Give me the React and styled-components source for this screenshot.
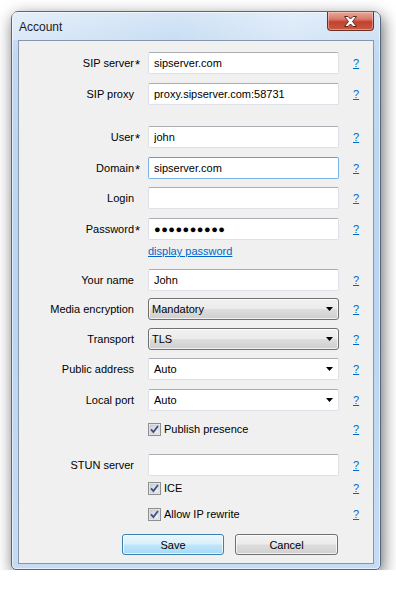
import React from "react";
import styled, { createGlobalStyle } from "styled-components";

const GlobalStyle = createGlobalStyle`
  body {
    margin: 0;
    background: #ffffff;
    font-family: "Liberation Sans", Arial, sans-serif;
    font-size: 11px;
    color: #000;
  }
`;

const Window = styled.div`
  box-sizing: border-box;
  margin: 11px 0 0 11px;
  width: 370px;
  height: 559px;
  padding: 0 6px 5px 6px;
  display: flex;
  flex-direction: column;
  border: 1px solid #55687d;
  border-radius: 7px 7px 5px 5px;
  background: linear-gradient(
    to bottom,
    #d6e6f7 0%,
    #c1d9f2 8%,
    #bad5f1 50%,
    #c6dcf4 100%
  );
  box-shadow: 2px 5px 16px rgba(0, 0, 0, 0.6), inset 0 0 0 1px rgba(255, 255, 255, 0.55);
`;

const TitleBar = styled.div`
  height: 28px;
  display: flex;
  justify-content: space-between;
  align-items: flex-start;
  background: linear-gradient(
    100deg,
    rgba(255, 255, 255, 0.35) 0%,
    rgba(255, 255, 255, 0) 45%,
    rgba(255, 255, 255, 0.3) 75%,
    rgba(255, 255, 255, 0.1) 100%
  );
  margin: 0 -6px;
  padding: 0 6px;
`;

const Title = styled.span`
  padding: 8px 0 0 1px;
  font-size: 12px;
  color: #1a1a2a;
`;

const CloseButton = styled.div`
  box-sizing: border-box;
  width: 47px;
  height: 19px;
  display: flex;
  align-items: center;
  justify-content: center;
  border: 1px solid #6b2f27;
  border-top: none;
  border-radius: 0 0 4px 4px;
  background: linear-gradient(
    to bottom,
    #e9a99b 0%,
    #d9796a 40%,
    #c2412e 55%,
    #c85a3f 100%
  );
  box-shadow: inset 0 0 0 1px rgba(255, 220, 210, 0.45);
`;

const Panel = styled.div`
  flex: 1;
  display: flex;
  flex-direction: column;
  padding-top: 11px;
  border: 1px solid #8797aa;
  background: #f0f0f0;
`;

const Row = styled.div`
  display: grid;
  grid-template-columns: 123px 191px 1fr;
  column-gap: 6px;
  align-items: center;
  height: ${(p) => p.$h || 22}px;
  margin-top: ${(p) => p.$mt || 0}px;
`;

const Label = styled.span`
  display: flex;
  justify-content: flex-end;
  align-items: center;
  white-space: nowrap;
`;

const Star = styled.span`
  display: inline-block;
  width: 8px;
  padding-left: 1px;
  box-sizing: border-box;
  font-size: 13px;
  line-height: 11px;
  margin-top: 2px;
`;

const TextField = styled.input`
  box-sizing: border-box;
  width: 191px;
  height: 22px;
  margin: 0;
  padding: 0 5px;
  font-family: "Liberation Sans", Arial, sans-serif;
  font-size: 11px;
  color: #000;
  background: #fff;
  border: 1px solid ${(p) => (p.$focus ? "#7eb4ea" : "#dde0e6")};
  border-top-color: ${(p) => (p.$focus ? "#569de5" : "#abadb3")};
  border-radius: 2px;
  outline: none;
  letter-spacing: ${(p) => (p.$dots ? "0.5px" : "0")};
`;

const ComboBox = styled.div`
  box-sizing: border-box;
  height: 22px;
  display: flex;
  align-items: center;
  justify-content: space-between;
  padding: 0 5px 0 ${(p) => (p.$list ? 3 : 5)}px;
  border: 1px solid ${(p) => (p.$list ? "#707070" : "#dde0e6")};
  border-top-color: ${(p) => (p.$list ? "#707070" : "#abadb3")};
  border-radius: ${(p) => (p.$list ? 3 : 2)}px;
  background: ${(p) =>
    p.$list
      ? "linear-gradient(to bottom, #f2f2f2 0%, #ebebeb 48%, #dddddd 52%, #cfcfcf 100%)"
      : "#ffffff"};
  box-shadow: ${(p) => (p.$list ? "inset 0 0 0 1px rgba(255,255,255,0.7)" : "none")};
`;

const Help = styled.a`
  padding-left: 8px;
  color: #0066cc;
  text-decoration: underline;
  cursor: pointer;
`;

const LinkText = styled.a`
  grid-column: 2;
  color: #0066cc;
  text-decoration: underline;
  cursor: pointer;
`;

const CheckLabel = styled.label`
  grid-column: 2;
  display: flex;
  align-items: center;
  gap: 3px;
`;

const ButtonRow = styled.div`
  display: flex;
  justify-content: flex-end;
  gap: 11px;
  margin: 12px 35px 0 0;
`;

const Button = styled.button`
  box-sizing: border-box;
  width: ${(p) => p.$w}px;
  height: 21px;
  margin: 0;
  font-family: "Liberation Sans", Arial, sans-serif;
  font-size: 11px;
  color: #000;
  border-radius: 3px;
  border: 1px solid ${(p) => (p.$default ? "#3c7fb1" : "#707070")};
  background: ${(p) =>
    p.$default
      ? "linear-gradient(to bottom, #eaf6fd 0%, #d9f0fc 48%, #bee6fd 52%, #a7d9f5 100%)"
      : "linear-gradient(to bottom, #f2f2f2 0%, #ebebeb 48%, #dddddd 52%, #cfcfcf 100%)"};
  box-shadow: inset 0 0 0 1px rgba(255, 255, 255, 0.7);
`;

const Arrow = () => (
  <svg width="7" height="4" viewBox="0 0 7 4">
    <polygon points="0,0 7,0 3.5,4" fill="#000" />
  </svg>
);

const CloseIcon = () => (
  <svg width="15" height="11" viewBox="0 0 15 11">
    <path
      d="M1.5 0.5 H5 L7.5 3 L10 0.5 H13.5 L9.5 5.5 L13.5 10.5 H10 L7.5 8 L5 10.5 H1.5 L5.5 5.5 Z"
      fill="#ffffff"
      stroke="#5a2a22"
      strokeWidth="1"
      strokeLinejoin="round"
    />
  </svg>
);

const CheckBox = () => (
  <svg width="13" height="13" viewBox="0 0 13 13">
    <defs>
      <linearGradient id="cbg" x1="0" y1="0" x2="1" y2="1">
        <stop offset="0" stopColor="#cbcfd5" />
        <stop offset="1" stopColor="#f6f6f6" />
      </linearGradient>
    </defs>
    <rect x="0.5" y="0.5" width="12" height="12" fill="#f4f4f4" stroke="#8e8f8f" />
    <rect x="2" y="2" width="9" height="9" fill="url(#cbg)" stroke="#b9bdc3" strokeWidth="0.6" />
    <path d="M3 6.3 L5.4 9 L10 3" fill="none" stroke="#3e4f87" strokeWidth="1.8" />
  </svg>
);

const Field = ({ label, required, value, focus, dots, mt }) => (
  <Row $mt={mt}>
    <Label>
      {label}
      <Star>{required ? "*" : ""}</Star>
    </Label>
    <TextField readOnly value={value} $focus={focus} $dots={dots} />
    <Help>?</Help>
  </Row>
);

const Combo = ({ label, value, list, mt }) => (
  <Row $mt={mt}>
    <Label>
      {label}
      <Star />
    </Label>
    <ComboBox $list={list}>
      <span>{value}</span>
      <Arrow />
    </ComboBox>
    <Help>?</Help>
  </Row>
);

const Check = ({ label, mt }) => (
  <Row $h={16} $mt={mt}>
    <CheckLabel>
      <CheckBox />
      {label}
    </CheckLabel>
    <Help>?</Help>
  </Row>
);

export default function App() {
  return (
    <>
      <GlobalStyle />
      <Window>
        <TitleBar>
          <Title>Account</Title>
          <CloseButton>
            <CloseIcon />
          </CloseButton>
        </TitleBar>
        <Panel>
          <Field label="SIP server" required value="sipserver.com" />
          <Field label="SIP proxy" value="proxy.sipserver.com:58731" mt={9} />
          <Field label="User" required value="john" mt={21} />
          <Field label="Domain" required value="sipserver.com" focus mt={9} />
          <Field label="Login" value="" mt={8} />
          <Field label="Password" required value="●●●●●●●●●●" dots mt={9} />
          <Row $h={14} $mt={4}>
            <LinkText>display password</LinkText>
          </Row>
          <Field label="Your name" value="John" mt={11} />
          <Combo label="Media encryption" value="Mandatory" list mt={7} />
          <Combo label="Transport" value="TLS" list mt={8} />
          <Combo label="Public address" value="Auto" mt={8} />
          <Combo label="Local port" value="Auto" mt={9} />
          <Check label="Publish presence" mt={10} />
          <Field label="STUN server" value="" mt={17} />
          <Check label="ICE" mt={4} />
          <Check label="Allow IP rewrite" mt={10} />
          <ButtonRow>
            <Button $w={102} $default>Save</Button>
            <Button $w={103}>Cancel</Button>
          </ButtonRow>
        </Panel>
      </Window>
    </>
  );
}
